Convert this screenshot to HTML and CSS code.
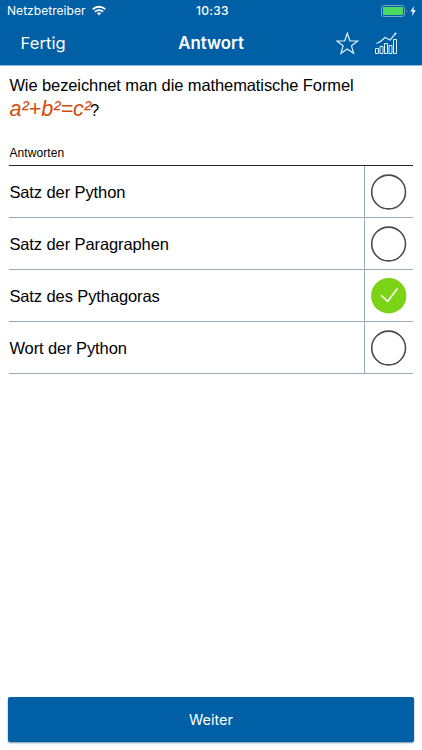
FILE: index.html
```html
<!DOCTYPE html>
<html lang="de">
<head>
<meta charset="utf-8">
<title>Antwort</title>
<link rel="stylesheet" href="styles.css">
</head>
<body>
<header class="top">
  <div class="status">
    <span class="carrier">Netzbetreiber</span>
    <svg class="wifi" width="14" height="11" viewBox="0 0 14 11" fill="none" stroke="#fff" stroke-width="1.9"><path d="M.8 4.2a9 9 0 0 1 12.4 0M3 6.7a5.8 5.8 0 0 1 8 0"/><path d="M7 10.4 4.9 8.3a3 3 0 0 1 4.2 0z" fill="#fff" stroke="none"/></svg>
    <span class="clock">10:33</span>
    <svg class="battery" width="37" height="12" viewBox="0 0 37 12"><rect x=".5" y=".5" width="23" height="11" rx="2.5" fill="none" stroke="#70a3cd"/><rect x="2" y="2" width="20" height="8" rx="1" fill="#4cd964"/><path d="M25 4q1.6 2 0 4z" fill="#70a3cd"/><path d="M33.2 1 29.3 6.6h2.5L30.9 11l4-5.8h-2.5z" fill="#fff"/></svg>
  </div>
  <nav class="nav">
    <span class="done">Fertig</span>
    <h1 class="title">Antwort</h1>
    <svg class="star" width="24" height="23" viewBox="0 0 24 23" fill="none" stroke="#d9f2ff" stroke-width="1.2"><path d="M12.3 1.2 14.9 8.8 22.6 9 16.5 13.8 18.6 21.3 12.3 16.9 6 21.3 8.1 13.8 2 9 9.7 8.8z"/></svg>
    <svg class="chart" width="23" height="23" viewBox="0 0 23 23" fill="none" stroke="#d9f2ff"><path d="M.5 16.5h3v5h-3zM5 14.5h3v7H5zM9.5 11.5h3v10h-3zM14 13.5h3v8h-3zM18.5 7.5h3v14h-3z"/><path d="M1.5 11.5 5.5 9.5 10 5.5 15.2 8 20.4 1.6" stroke-width="1.2"/><circle cx="20.5" cy="1.5" r=".7"/></svg>
  </nav>
</header>
<main class="content">
  <p class="question"><span class="ask">Wie bezeichnet man die mathematische Formel</span><br><em class="formula">a²+b²=c²</em><span class="mark">?</span></p>
  <h2 class="label">Antworten</h2>
  <ul class="answers">
    <li class="answer"><span class="text">Satz der Python</span><span class="choice"><svg class="ring" width="36" height="36" viewBox="0 0 36 36"><circle cx="17.6" cy="18" r="16.9"/></svg></span></li>
    <li class="answer"><span class="text">Satz der Paragraphen</span><span class="choice"><svg class="ring" width="36" height="36" viewBox="0 0 36 36"><circle cx="17.6" cy="18" r="16.9"/></svg></span></li>
    <li class="answer"><span class="text">Satz des Pythagoras</span><span class="choice"><svg class="ring checked" width="36" height="36" viewBox="0 0 36 36"><circle cx="17.7" cy="17.7" r="17.7"/><path d="M10 17.2 16.7 23.3 26.5 10.5"/></svg></span></li>
    <li class="answer"><span class="text">Wort der Python</span><span class="choice"><svg class="ring" width="36" height="36" viewBox="0 0 36 36"><circle cx="17.6" cy="18" r="16.9"/></svg></span></li>
  </ul>
</main>
<footer class="footer"><button class="next">Weiter</button></footer>
</body>
</html>
```
FILE: styles.css
```css
* { box-sizing: border-box; }
body {
  margin: 0;
  height: 750px;
  display: flex;
  flex-direction: column;
  overflow: hidden;
  background: #fff;
  color: #000;
  font-family: "Liberation Sans", sans-serif;
}
.top {
  height: 66px;
  background: #005fa5;
  border-bottom: 1px solid #8dbde0;
  color: #fff;
  font-family: Inter, sans-serif;
}
.status {
  display: grid;
  grid-template-columns: 92px 104px 184px 37px;
  align-items: center;
  height: 22px;
  font-size: 12px;
  line-height: 22px;
}
.carrier { padding-left: 7px; letter-spacing: 0.05px; white-space: nowrap; }
.wifi { margin-bottom: 2px; }
.clock { font-weight: 500; letter-spacing: 0.3px; }
.battery { margin: 0 0 1px 1px; }
.nav {
  display: grid;
  grid-template-columns: 111px 200px 24px 23px;
  align-items: center;
  height: 42px;
}
.done { padding-left: 20.5px; font-size: 16.5px; letter-spacing: 0.1px; }
.title { margin: 0; text-align: center; font-size: 16.8px; font-weight: 600; }
.star { margin-left: 24px; }
.chart { margin-left: 40px; }
.content { flex: 1; padding: 9px 9px 0 9.4px; }
.question { margin: 0; height: 66px; font-size: 16.5px; line-height: 20px; letter-spacing: -0.1px; }
.formula { font-size: 21.6px; line-height: 28px; letter-spacing: 0; color: #d44a08; }
.mark { font-size: 16.5px; margin-left: -1px; }
.label { margin: 0; height: 24px; font-size: 12px; font-weight: 400; line-height: 24px; letter-spacing: 0.1px; }
.answers { margin: 0; padding: 0; list-style: none; border-top: 1px solid #292929; }
.answer {
  display: grid;
  grid-template-columns: 1fr 49px;
  height: 52px;
  border-bottom: 1px solid #98abba;
  font-size: 16.5px;
  line-height: 52px;
  letter-spacing: -0.1px;
}
.choice { display: grid; place-items: center; border-left: 1px solid #98abba; }
.ring { display: block; fill: none; stroke: #4c4c4c; stroke-width: 1.6; }
.checked circle { fill: #7ad314; stroke: none; }
.checked path { stroke: #fff; stroke-width: 1.5; }
.footer { padding: 0 8px 8px; }
.next {
  display: block;
  width: 100%;
  height: 45px;
  padding: 0;
  border: 0;
  border-radius: 2px;
  background: #005fa5;
  box-shadow: 0 1px 2px #718fa8;
  color: #fff;
  font-family: Inter, sans-serif;
  font-size: 14.5px;
}
```
